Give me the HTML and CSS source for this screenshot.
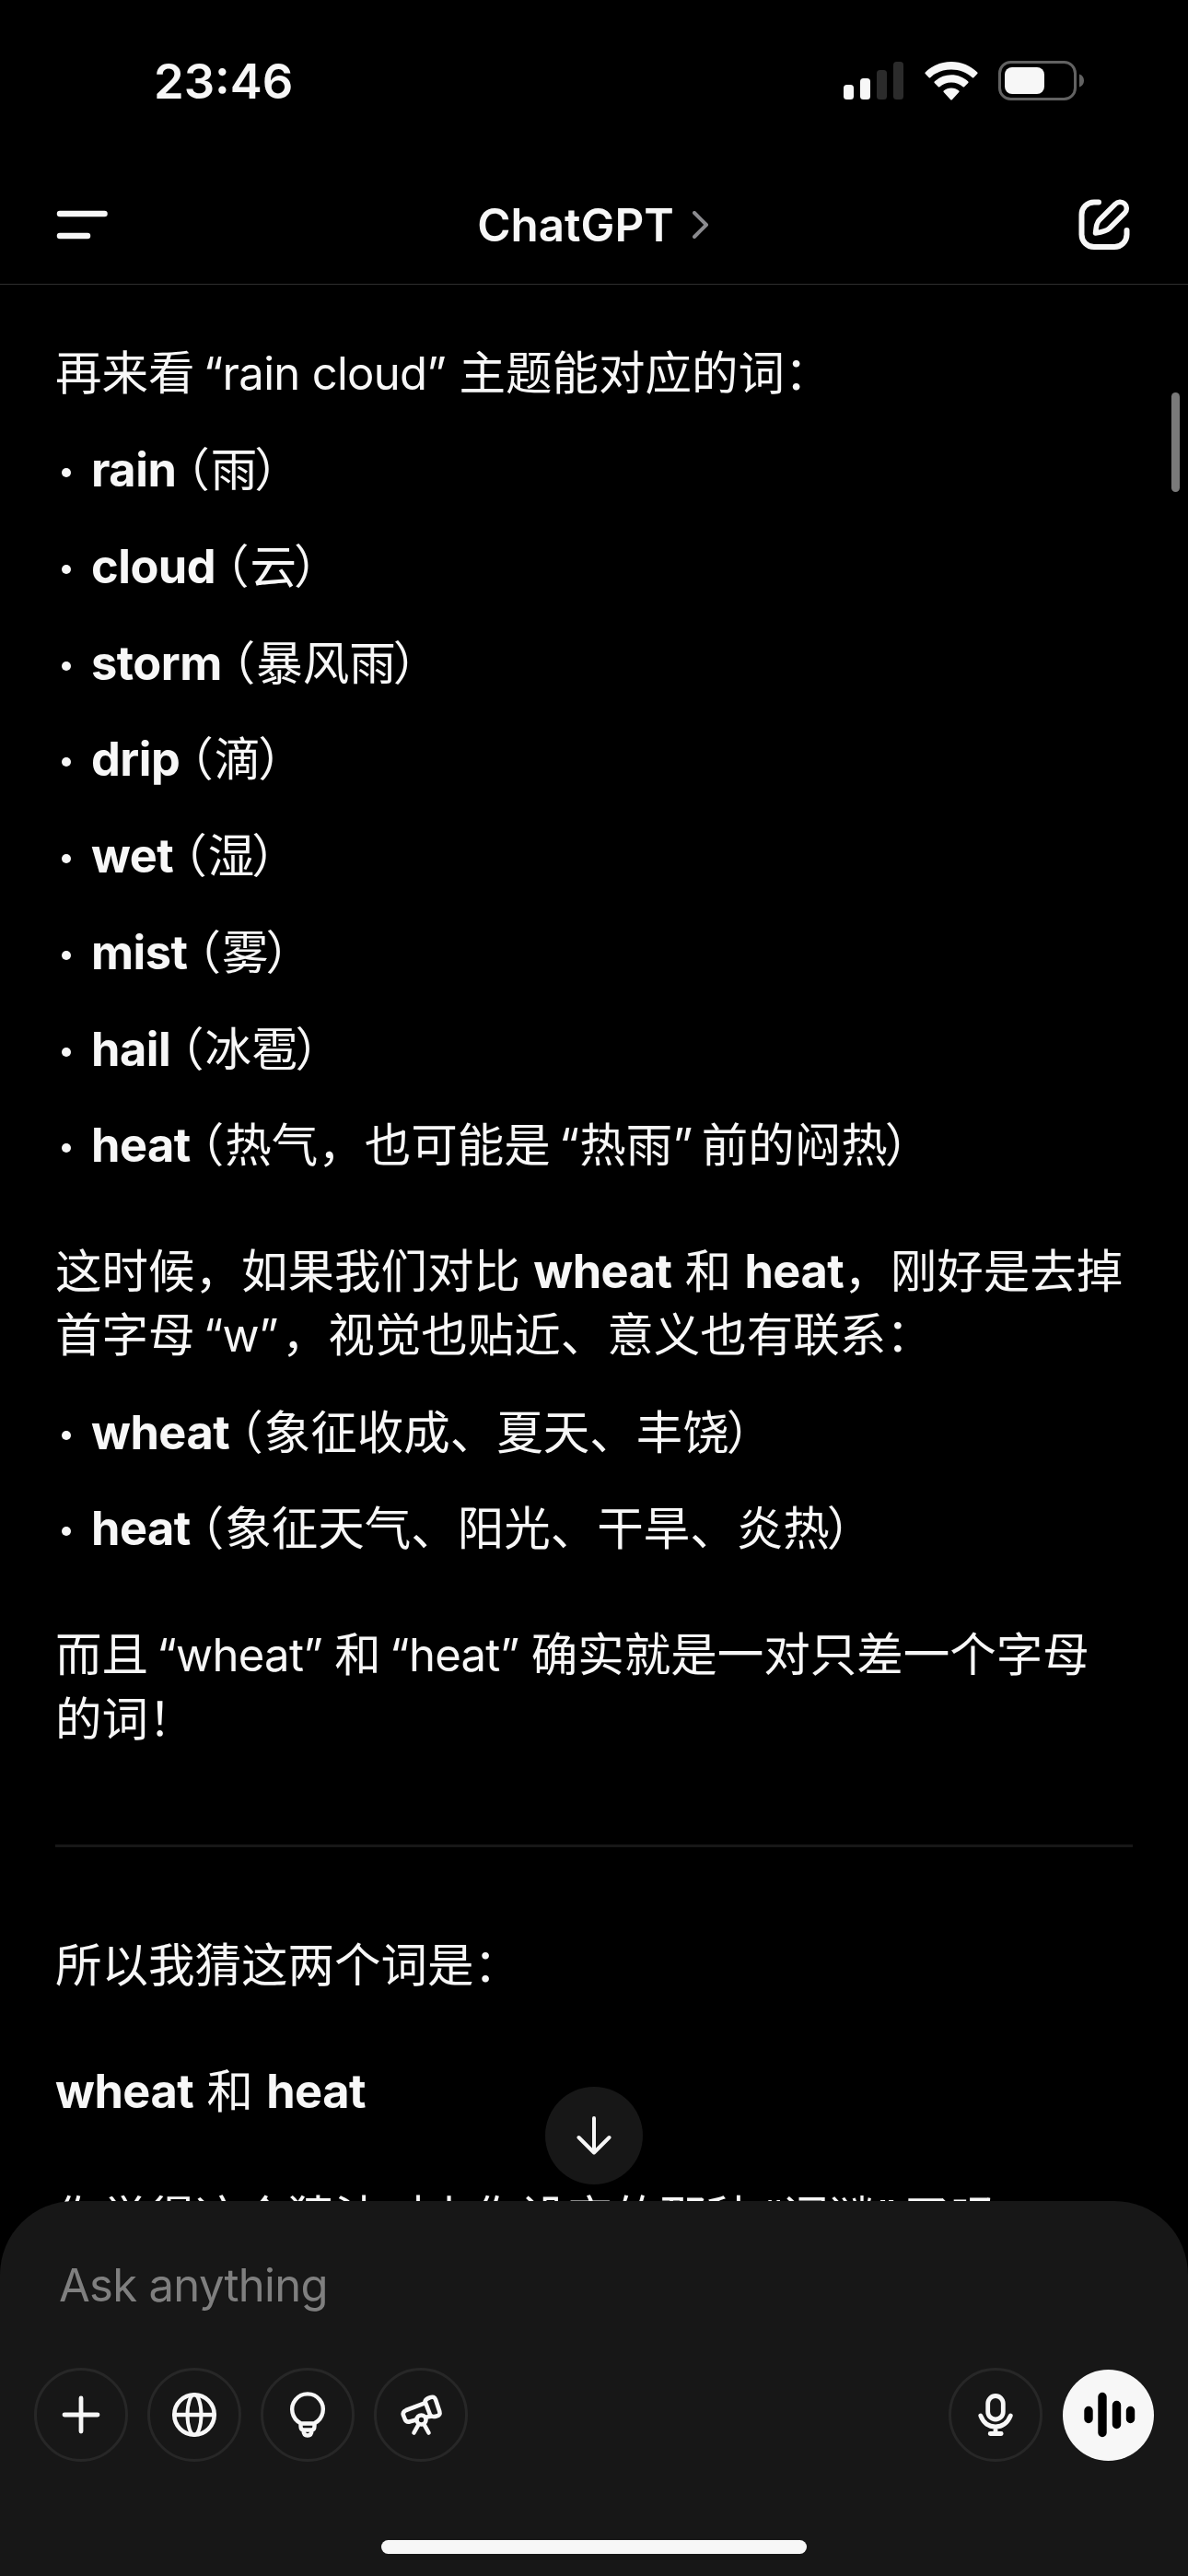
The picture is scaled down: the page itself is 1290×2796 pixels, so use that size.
FILE: index.html
```html
<!DOCTYPE html>
<html lang="zh-CN">
<head>
  <meta charset="UTF-8">
  <meta name="viewport" content="width=device-width, initial-scale=1.0">
  <title>ChatGPT</title>
  <link rel="stylesheet" href="styles.css">
</head>
<body>
  <div class="screen">
    <!-- Status bar -->
    <div class="status-bar">
      <span class="time">23:46</span>
      <div class="status-icons">
        <svg class="signal" viewBox="0 0 65 41">
          <rect x="0" y="25" width="11" height="16" rx="3.5" fill="#f7f7f7"/>
          <rect x="18" y="18" width="11" height="23" rx="3.5" fill="#f7f7f7"/>
          <rect x="36" y="9" width="11" height="32" rx="3.5" fill="#2b2b2b"/>
          <rect x="54" y="0" width="11" height="41" rx="3.5" fill="#2b2b2b"/>
        </svg>
        <svg class="wifi" viewBox="0 0 58 42" fill="#f7f7f7">
          <path d="M29 0C18 0 8 4.300 .7 11.500Q0 12.300.7 13L4.700 17.200Q5.400 17.900 6.200 17.200C12.300 11.500 20.300 8.500 29 8.500S45.700 11.500 51.800 17.200Q52.600 17.900 53.300 17.200L57.300 13Q58 12.300 57.300 11.500C50 4.300 40 0 29 0Z"/>
          <path d="M29 14.300C22 14.300 15.600 17 10.700 21.500Q10 22.300 10.700 23L14.900 27.200Q15.600 27.900 16.400 27.200C19.800 24.200 24.200 22.500 29 22.500S38.200 24.200 41.600 27.200Q42.400 27.900 43.100 27.200L47.300 23Q48 22.300 47.300 21.500C42.400 17 36 14.300 29 14.300Z"/>
          <path d="M29 28.500C25.800 28.500 23 29.700 20.700 31.500Q20 32.300 20.700 33L28.200 41.200Q29 42 29.800 41.200L37.300 33Q38 32.300 37.300 31.500C35 29.700 32.200 28.500 29 28.500Z"/>
        </svg>
        <svg class="battery" viewBox="0 0 94 44">
          <rect x="1.500" y="1.500" width="82" height="40" rx="12" fill="none" stroke="#626262" stroke-width="3"/>
          <rect x="7" y="7" width="43" height="29" rx="8" fill="#f7f7f7"/>
          <path d="M88 14.500C91 15.500 93 18 93 21.500S91 27.500 88 28.500Z" fill="#626262"/>
        </svg>
      </div>
    </div>

    <!-- Navigation -->
    <div class="nav">
      <svg class="menu" viewBox="0 0 56 32" stroke="#f7f7f7" stroke-width="6.500" stroke-linecap="round">
        <path d="M4 4H52.500M4 28H34"/>
      </svg>
      <div class="title">
        <span>ChatGPT</span>
        <svg class="chevron" viewBox="0 0 18 30"><path d="M2 2L15 15L2 28" fill="none" stroke="#8a8a8e" stroke-width="4" stroke-linecap="round" stroke-linejoin="round"/></svg>
      </div>
      <svg class="compose" viewBox="0 0 56 56" fill="none" stroke="#f7f7f7" stroke-width="6" stroke-linecap="round" stroke-linejoin="round">
        <path d="M22 3.500H17A13.500 13.500 0 0 0 3.500 17V38.500A13.500 13.500 0 0 0 17 52H39A13.500 13.500 0 0 0 52.500 38.500V34"/>
        <path stroke-width="5.500" d="M40 5.500A6.400 6.400 0 0 1 50.500 15L33.500 32C31 34.500 28 35.500 18.500 37C19.500 28.500 20 25.500 23 22.500Z"/>
      </svg>
    </div>

    <!-- Conversation -->
    <div class="chat">
      <p>再来看 <span class="en">“rain cloud”</span> 主题能对应的词：</p>
      <ul>
        <li><strong>rain</strong> <span class="paren">（</span>雨<span class="paren">）</span></li>
        <li><strong>cloud</strong> <span class="paren">（</span>云<span class="paren">）</span></li>
        <li><strong>storm</strong> <span class="paren">（</span>暴风雨<span class="paren">）</span></li>
        <li><strong>drip</strong> <span class="paren">（</span>滴<span class="paren">）</span></li>
        <li><strong>wet</strong> <span class="paren">（</span>湿<span class="paren">）</span></li>
        <li><strong>mist</strong> <span class="paren">（</span>雾<span class="paren">）</span></li>
        <li><strong>hail</strong> <span class="paren">（</span>冰雹<span class="paren">）</span></li>
        <li><strong>heat</strong> <span class="paren">（</span>热气，也可能是 <span class="quote">“热雨”</span> 前的闷热<span class="paren">）</span></li>
      </ul>
      <p>这时候，如果我们对比 <strong>wheat</strong> 和 <strong>heat</strong>，刚好是去掉<br>首字母 <span class="en wide">“w”</span>，视觉也贴近、意义也有联系：</p>
      <ul>
        <li><strong>wheat</strong> <span class="paren">（</span>象征收成、夏天、丰饶<span class="paren">）</span></li>
        <li><strong>heat</strong> <span class="paren">（</span>象征天气、阳光、干旱、炎热<span class="paren">）</span></li>
      </ul>
      <p>而且 <span class="en tight">“wheat”</span> 和 <span class="en tight">“heat”</span> 确实就是一对只差一个字母<br>的词！</p>
      <hr>
      <p>所以我猜这两个词是：</p>
      <p><strong>wheat</strong> 和 <strong>heat</strong></p>
      <p>你觉得这个猜法对上你设定的那种 <span class="quote">“词谜”</span> 了吗</p>
      <div class="scrollbar"></div>
    </div>

    <button class="scroll-down">
      <svg viewBox="0 0 40 42" fill="none" stroke="#f7f7f7" stroke-width="4" stroke-linecap="round" stroke-linejoin="round"><path d="M20 2V39M3.500 23L20 39.500L36.500 23"/></svg>
    </button>

    <!-- Composer -->
    <div class="composer">
      <div class="placeholder">Ask anything</div>
      <div class="tools">
        <button class="tool">
          <svg viewBox="0 0 60 60"><path d="M30 12V48M12 30H48" stroke-width="4.800"/></svg>
        </button>
        <button class="tool">
          <svg viewBox="0 0 60 60"><circle cx="30" cy="30" r="21.700"/><ellipse cx="30" cy="30" rx="7.500" ry="21.700" stroke-width="4"/><path d="M8.500 30H51.500"/></svg>
        </button>
        <button class="tool">
          <svg viewBox="0 0 60 60"><path d="M22.500 39.200A16.800 16.800 0 1 1 37.500 39.200V42Q37.500 46.500 34.500 46.500Q34.500 52.500 30 52.500T25.500 46.500Q22.500 46.500 22.500 42ZM22.500 39.500H37.500M25 46.500H35" stroke-width="4.400"/></svg>
        </button>
        <button class="tool">
          <svg viewBox="0 0 60 60" stroke-width="4.200"><path d="M34.800 17.200L14 25Q9.800 26.800 11 30.500L13 35.500Q14.500 38.500 18.500 37.200L25 35.500M36.500 32.500L42 31.500M34.500 15.500Q35.500 12.500 40 11.200Q44.500 9.500 46 13.500L50.300 26.500Q51.500 30.500 47 31.500Q42 33 40 30Z"/><circle cx="30.500" cy="35.500" r="5"/><path d="M27.500 40.500L22.500 49.500M33.500 40.500L38.500 49.500"/></svg>
        </button>
        <button class="tool mic">
          <svg viewBox="0 0 60 60"><rect x="21.700" y="9.500" width="16.600" height="25.500" rx="8.300" stroke-width="4.800"/><path d="M13.800 31C17 39 22.500 43 30 43S43 39 46.300 31M30 43V49M24.200 50.500H36.200" stroke-width="4.800"/></svg>
        </button>
        <button class="voice">
          <svg viewBox="0 0 60 60" stroke="#000" stroke-width="9.400" stroke-linecap="round"><path d="M8 25.500V34.500M23 10.500V49.500M38.500 19.500V40.500M53.500 25.500V34.500"/></svg>
        </button>
      </div>
      <div class="home-indicator"></div>
    </div>
  </div>
</body>
</html>
```

FILE: styles.css
```css
* {
  box-sizing: border-box;
}
body {
  margin: 0;
  background-color: #000;
  color: #f7f7f7;
  font-family: Inter, "Noto Sans CJK SC", sans-serif;
}
button {
  padding: 0;
  border: none;
  display: flex;
  align-items: center;
  justify-content: center;
}
svg {
  display: block;
}
.screen {
  position: relative;
  width: 1290px;
  height: 2796px;
  overflow: hidden;
  display: flex;
  flex-direction: column;
}

/* Status bar */
.status-bar {
  height: 175px;
  flex: none;
  padding: 0 112px 0 167px;
  display: flex;
  align-items: center;
  justify-content: space-between;
}
.time {
  font-size: 52.5px;
  font-weight: 600;
}
.status-icons {
  display: flex;
  align-items: center;
}
.signal {
  width: 65px;
  height: 41px;
  margin-right: 23px;
}
.wifi {
  width: 58px;
  height: 42px;
  margin-right: 22px;
}
.battery {
  width: 94px;
  height: 44px;
}

/* Navigation */
.nav {
  height: 134px;
  flex: none;
  padding: 5px 63px 0 61px;
  border-bottom: 1px solid #2e2e2e;
  display: flex;
  align-items: center;
  justify-content: space-between;
}
.menu {
  width: 56px;
  height: 32px;
}
.title {
  display: flex;
  align-items: center;
  gap: 20px;
  font-size: 49.3px;
  font-weight: 600;
}
.chevron {
  width: 18px;
  height: 30px;
}
.compose {
  width: 56px;
  height: 56px;
}

/* Conversation */
.chat {
  position: relative;
  flex: 1;
  min-height: 0;
  padding: 61px 60px 0;
  font-size: 50.5px;
  line-height: 69px;
  white-space: nowrap;
}
.chat p {
  margin: 0 0 67.8px;
}
.chat p:has(+ ul) {
  margin-bottom: 35.4px;
}
.chat ul {
  margin: 0 0 68px;
  padding: 0;
  list-style: none;
}
.chat li {
  position: relative;
  margin-bottom: 35.7px;
  padding-left: 39px;
}
.chat li:last-child {
  margin-bottom: 0;
}
.chat li::before {
  content: "";
  position: absolute;
  left: 7px;
  top: 33px;
  width: 10px;
  height: 10px;
  border-radius: 50%;
  background-color: #f7f7f7;
}
.chat strong {
  font-weight: 650;
  letter-spacing: -0.5px;
}
.en {
  margin-left: -5px;
  font-size: 49px;
  letter-spacing: -0.7px;
}
.tight {
  margin-right: -1px;
}
.wide {
  margin-right: 4px;
}
.quote {
  margin: 0 -5px 0 -5px;
}
.paren {
  margin: 0 1px 0 -3px;
  font-feature-settings: "halt";
}
.chat hr {
  height: 3px;
  margin: 102px 0 93px;
  border: none;
  background-color: #171717;
}
.scrollbar {
  position: absolute;
  top: 117px;
  right: 9px;
  width: 9px;
  height: 108px;
  border-radius: 5px;
  background-color: #7a7a7a;
}
.scroll-down {
  position: absolute;
  left: 592px;
  top: 2265px;
  width: 106px;
  height: 106px;
  border-radius: 50%;
  background-color: #171717;
}
.scroll-down svg {
  width: 40px;
  height: 42px;
}

/* Composer */
.composer {
  position: relative;
  flex: none;
  height: 407px;
  padding: 57px 37px 0 37px;
  border-radius: 80px 80px 0 0;
  background-color: #171717;
}
.placeholder {
  margin-left: 27px;
  font-size: 49px;
  line-height: 69px;
  letter-spacing: -0.7px;
  color: #7f7f7f;
}
.tools {
  display: flex;
  align-items: center;
  gap: 21px;
  margin-top: 55px;
}
.tool,
.voice {
  width: 102px;
  height: 102px;
  border-radius: 50%;
}
.tool {
  border: 3px solid #272727;
  background: none;
}
.tool svg {
  width: 60px;
  height: 60px;
  fill: none;
  stroke: #f7f7f7;
  stroke-width: 4.600;
  stroke-linecap: round;
  stroke-linejoin: round;
}
.mic {
  margin-left: auto;
}
.voice {
  width: 99px;
  height: 99px;
  margin-left: 1px;
  background-color: #f7f7f7;
}
.voice svg {
  width: 60px;
  height: 60px;
}
.home-indicator {
  position: absolute;
  left: 414px;
  bottom: 24px;
  width: 462px;
  height: 15px;
  border-radius: 8px;
  background-color: #f7f7f7;
}
```
